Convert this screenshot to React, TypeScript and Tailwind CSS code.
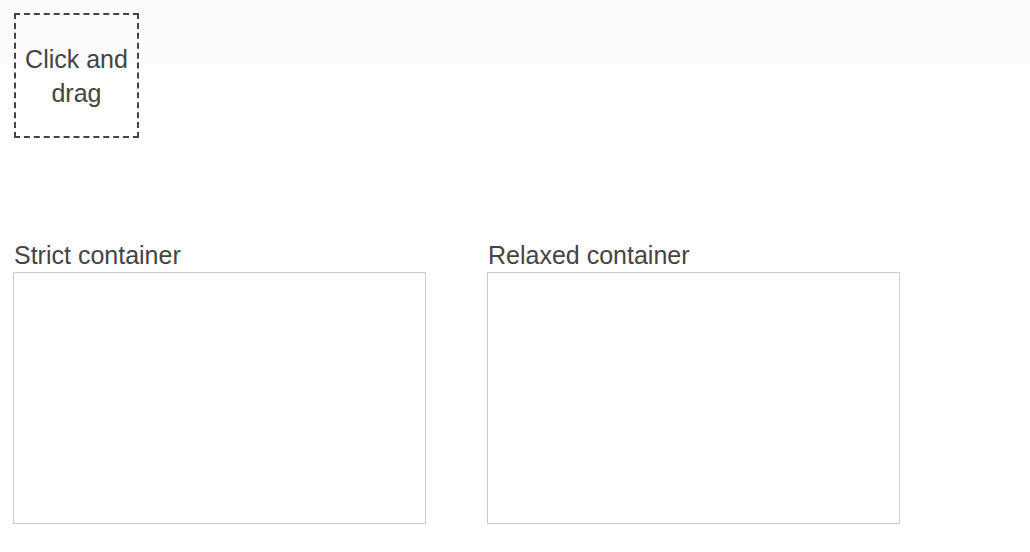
export default function App() {
  return (
    <div className="relative min-h-[552px] w-[1030px] bg-white text-[#444]" style={{ fontFamily: '"Liberation Sans", Arial, sans-serif' }}>
      <div className="h-[64px] w-full bg-[#fbfbfb]" />
      <div className="absolute left-[14px] top-[13px] flex h-[125px] w-[125px] items-center justify-center border-2 border-dashed border-[#444] text-center text-[25px] leading-[34px]">
        Click and
        <br />
        drag
      </div>
      <div className="mt-[177px] flex gap-[61px] pl-[13px]">
        <div className="flex w-[413px] flex-col">
          <div className="pl-px text-[25px] leading-[28px]">Strict container</div>
          <div className="mt-[3px] h-[252px] border border-[#ccc]" />
        </div>
        <div className="flex w-[413px] flex-col">
          <div className="pl-px text-[25px] leading-[28px]">Relaxed container</div>
          <div className="mt-[3px] h-[252px] border border-[#ccc]" />
        </div>
      </div>
    </div>
  );
}
